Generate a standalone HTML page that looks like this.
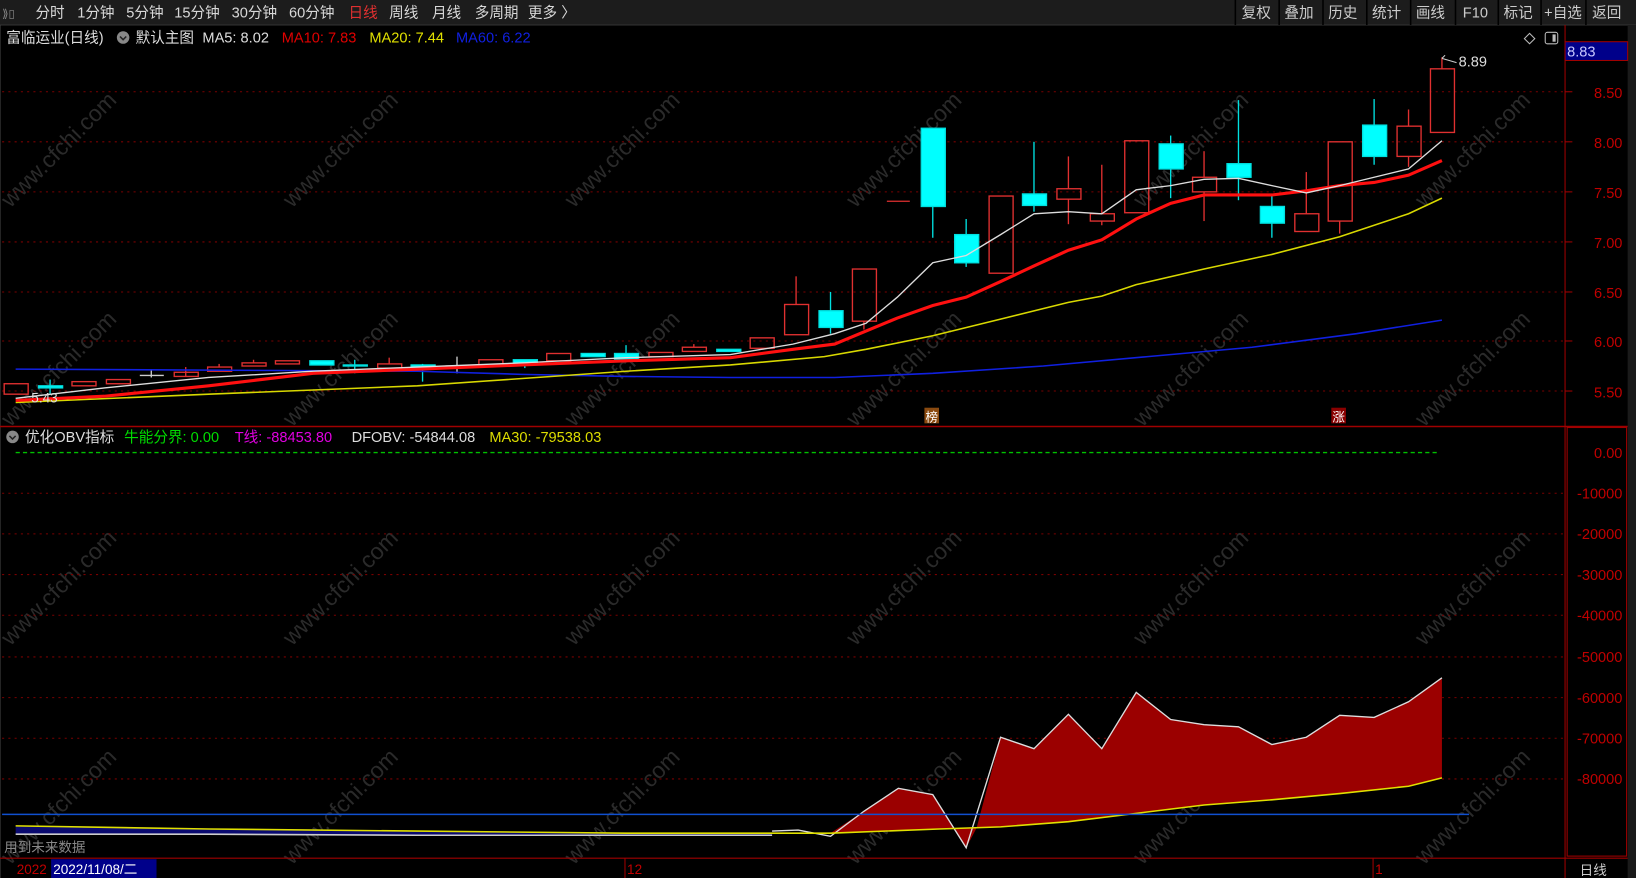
<!DOCTYPE html>
<html><head><meta charset="utf-8"><style>
html,body{margin:0;padding:0;background:#000;overflow:hidden}
svg{display:block}
text{font-family:"Liberation Sans","Noto Sans CJK SC",sans-serif}
</style></head><body>
<svg width="1636" height="878" viewBox="0 0 1568 842" preserveAspectRatio="none" xmlns="http://www.w3.org/2000/svg">
<rect width="1568" height="842" fill="#000"/>
<!-- toolbar -->
<rect x="0" y="0" width="1568" height="24" fill="#1c1c1c"/>
<line x1="0" y1="24" x2="1568" y2="24" stroke="#333"/>
<g font-size="14" fill="#d8d8d8">
<text x="2" y="17" font-size="11" fill="#888">⟫▯</text>
<text x="34" y="17">分时</text><text x="74" y="17">1分钟</text><text x="121" y="17">5分钟</text><text x="167" y="17">15分钟</text><text x="222" y="17">30分钟</text><text x="277" y="17">60分钟</text>
<text x="334" y="17" fill="#e03030">日线</text><text x="373" y="17">周线</text><text x="414" y="17">月线</text><text x="455" y="17">多周期</text><text x="506" y="17">更多 〉</text>
<g fill="#ccc"><text x="1190" y="17">复权</text><text x="1231" y="17">叠加</text><text x="1273" y="17">历史</text><text x="1315" y="17">统计</text><text x="1357" y="17">画线</text><text x="1402" y="17">F10</text><text x="1441" y="17">标记</text><text x="1480" y="17">+自选</text><text x="1526" y="17">返回</text></g>
</g>
<g stroke="#000" stroke-width="1.5"><line x1="1184" y1="0" x2="1184" y2="24"/><line x1="1226" y1="0" x2="1226" y2="24"/><line x1="1268" y1="0" x2="1268" y2="24"/><line x1="1310" y1="0" x2="1310" y2="24"/><line x1="1352" y1="0" x2="1352" y2="24"/><line x1="1395" y1="0" x2="1395" y2="24"/><line x1="1436" y1="0" x2="1436" y2="24"/><line x1="1477" y1="0" x2="1477" y2="24"/><line x1="1520" y1="0" x2="1520" y2="24"/></g>
<!-- right strip -->
<rect x="1560" y="24" width="8" height="818" fill="#1a1a1a"/>
<line x1="1500" y1="24" x2="1500" y2="842" stroke="#a00000"/>
<line x1="0" y1="24" x2="0" y2="842" stroke="#444"/>
<!-- watermarks -->
<g fill="#2a2a2a" font-size="22" font-family="Liberation Sans,sans-serif">
<g transform="translate(10,200) rotate(-45)"><text>www.cfchi.com</text></g>
<g transform="translate(280,200) rotate(-45)"><text>www.cfchi.com</text></g>
<g transform="translate(550,200) rotate(-45)"><text>www.cfchi.com</text></g>
<g transform="translate(820,200) rotate(-45)"><text>www.cfchi.com</text></g>
<g transform="translate(1095,200) rotate(-45)"><text>www.cfchi.com</text></g>
<g transform="translate(1365,200) rotate(-45)"><text>www.cfchi.com</text></g>
<g transform="translate(10,410) rotate(-45)"><text>www.cfchi.com</text></g>
<g transform="translate(280,410) rotate(-45)"><text>www.cfchi.com</text></g>
<g transform="translate(550,410) rotate(-45)"><text>www.cfchi.com</text></g>
<g transform="translate(820,410) rotate(-45)"><text>www.cfchi.com</text></g>
<g transform="translate(1095,410) rotate(-45)"><text>www.cfchi.com</text></g>
<g transform="translate(1365,410) rotate(-45)"><text>www.cfchi.com</text></g>
<g transform="translate(10,620) rotate(-45)"><text>www.cfchi.com</text></g>
<g transform="translate(280,620) rotate(-45)"><text>www.cfchi.com</text></g>
<g transform="translate(550,620) rotate(-45)"><text>www.cfchi.com</text></g>
<g transform="translate(820,620) rotate(-45)"><text>www.cfchi.com</text></g>
<g transform="translate(1095,620) rotate(-45)"><text>www.cfchi.com</text></g>
<g transform="translate(1365,620) rotate(-45)"><text>www.cfchi.com</text></g>
<g transform="translate(10,830) rotate(-45)"><text>www.cfchi.com</text></g>
<g transform="translate(280,830) rotate(-45)"><text>www.cfchi.com</text></g>
<g transform="translate(550,830) rotate(-45)"><text>www.cfchi.com</text></g>
<g transform="translate(820,830) rotate(-45)"><text>www.cfchi.com</text></g>
<g transform="translate(1095,830) rotate(-45)"><text>www.cfchi.com</text></g>
<g transform="translate(1365,830) rotate(-45)"><text>www.cfchi.com</text></g>
</g>
<!-- header -->
<g font-size="14">
<text x="6" y="41" fill="#ddd">富临运业(日线)</text>
<circle cx="118" cy="36" r="6" fill="#888"/><path d="M115 35 l3 3 l3 -3" stroke="#222" fill="none" stroke-width="1.5"/>
<text x="130" y="41" fill="#ddd">默认主图</text>
<text x="194" y="41" fill="#ddd">MA5: 8.02</text>
<text x="270" y="41" fill="#e00000">MA10: 7.83</text>
<text x="354" y="41" fill="#e0e000">MA20: 7.44</text>
<text x="437" y="41" fill="#1020e0">MA60: 6.22</text>
</g>
<path d="M1466 32 l5 5 l-5 5 l-5 -5z" stroke="#bbb" fill="none"/>
<rect x="1481" y="31" width="12" height="11" rx="2" stroke="#bbb" fill="none"/><rect x="1488" y="33" width="3" height="7" fill="#bbb"/>
<!-- price grid -->
<g stroke="#7a0000" stroke-dasharray="2,4">
<line x1="2" y1="88" x2="1500" y2="88"/><line x1="2" y1="136" x2="1500" y2="136"/><line x1="2" y1="184" x2="1500" y2="184"/><line x1="2" y1="232" x2="1500" y2="232"/><line x1="2" y1="280" x2="1500" y2="280"/><line x1="2" y1="327" x2="1500" y2="327"/><line x1="2" y1="375" x2="1500" y2="375"/>
</g>
<g fill="#c00000" font-size="14" text-anchor="end">
<text x="1555" y="94">8.50</text><text x="1555" y="142">8.00</text><text x="1555" y="190">7.50</text><text x="1555" y="238">7.00</text><text x="1555" y="286">6.50</text><text x="1555" y="333">6.00</text><text x="1555" y="381">5.50</text>
</g>
<g stroke="#a00000"><line x1="1500" y1="88" x2="1507" y2="88"/><line x1="1500" y1="136" x2="1507" y2="136"/><line x1="1500" y1="184" x2="1507" y2="184"/><line x1="1500" y1="232" x2="1507" y2="232"/><line x1="1500" y1="280" x2="1507" y2="280"/><line x1="1500" y1="327" x2="1507" y2="327"/><line x1="1500" y1="375" x2="1507" y2="375"/></g>
<rect x="1500" y="40" width="60" height="18" fill="#00008a" stroke="#a00000"/>
<text x="1502" y="54" fill="#c8c8ff" font-size="14">8.83</text>
<!-- candles -->
<g stroke-width="1.3">
<!-- red hollow -->
<g stroke="#e03030" fill="none">
<rect x="4" y="368" width="23" height="10"/>
<rect x="69" y="366" width="23" height="4"/>
<rect x="102" y="364" width="23" height="4"/>
<line x1="178" y1="352" x2="178" y2="361"/><rect x="167" y="357" width="23" height="4"/>
<rect x="199" y="352" width="23" height="4"/><line x1="210" y1="349" x2="210" y2="352"/>
<rect x="232" y="348" width="23" height="3"/><line x1="243" y1="345" x2="243" y2="348"/>
<rect x="264" y="346" width="23" height="3"/>
<rect x="362" y="349" width="23" height="4"/><line x1="373" y1="343" x2="373" y2="349"/>
<rect x="459" y="345" width="23" height="6"/>
<rect x="524" y="339" width="23" height="7"/>
<rect x="622" y="338" width="23" height="4"/>
<rect x="654" y="333" width="23" height="4"/><line x1="665" y1="330" x2="665" y2="333"/>
<rect x="719" y="324" width="23" height="10"/>
<rect x="752" y="292" width="23" height="29"/><line x1="763" y1="265" x2="763" y2="292"/>
<rect x="817" y="258" width="23" height="50"/><line x1="828" y1="308" x2="828" y2="316"/>
<line x1="850" y1="193" x2="872" y2="193"/>
<rect x="948" y="188" width="23" height="74"/>
<rect x="1013" y="181" width="23" height="10"/><line x1="1024" y1="150" x2="1024" y2="181"/><line x1="1024" y1="191" x2="1024" y2="215"/>
<rect x="1045" y="205" width="23" height="7"/><line x1="1056" y1="158" x2="1056" y2="205"/><line x1="1056" y1="212" x2="1056" y2="216"/>
<rect x="1078" y="135" width="23" height="69"/>
<rect x="1143" y="170" width="23" height="14"/><line x1="1154" y1="145" x2="1154" y2="170"/><line x1="1154" y1="184" x2="1154" y2="212"/>
<rect x="1241" y="205" width="23" height="17"/><line x1="1252" y1="165" x2="1252" y2="205"/>
<rect x="1273" y="136" width="23" height="76"/><line x1="1284" y1="212" x2="1284" y2="224"/>
<rect x="1339" y="121" width="23" height="29"/><line x1="1350" y1="105" x2="1350" y2="121"/><line x1="1350" y1="150" x2="1350" y2="160"/>
<rect x="1371" y="66" width="23" height="61"/><line x1="1382" y1="55" x2="1382" y2="66"/>
</g>
<!-- cyan -->
<g fill="#00ffff" stroke="#00e0e0">
<line x1="48" y1="364" x2="48" y2="378"/><rect x="37" y="370" width="23" height="2"/>
<rect x="297" y="346" width="23" height="4"/>
<line x1="340" y1="345" x2="340" y2="358"/><rect x="329" y="350" width="23" height="1"/>
<line x1="405" y1="349" x2="405" y2="366"/><rect x="394" y="350" width="23" height="2"/>
<rect x="492" y="345" width="23" height="4"/><line x1="503" y1="349" x2="503" y2="353"/>
<rect x="557" y="339" width="23" height="3"/>
<rect x="589" y="339" width="23" height="6"/><line x1="600" y1="331" x2="600" y2="339"/>
<rect x="687" y="335" width="23" height="2"/>
<rect x="785" y="298" width="23" height="16"/><line x1="796" y1="280" x2="796" y2="298"/><line x1="796" y1="314" x2="796" y2="320"/>
<rect x="883" y="123" width="23" height="75"/><line x1="894" y1="198" x2="894" y2="228"/>
<rect x="915" y="225" width="23" height="27"/><line x1="926" y1="210" x2="926" y2="225"/><line x1="926" y1="252" x2="926" y2="256"/>
<rect x="980" y="186" width="23" height="11"/><line x1="991" y1="136" x2="991" y2="186"/><line x1="991" y1="197" x2="991" y2="203"/>
<rect x="1111" y="138" width="23" height="24"/><line x1="1122" y1="130" x2="1122" y2="138"/><line x1="1122" y1="162" x2="1122" y2="190"/>
<rect x="1176" y="157" width="23" height="13"/><line x1="1187" y1="96" x2="1187" y2="157"/><line x1="1187" y1="170" x2="1187" y2="192"/>
<rect x="1208" y="198" width="23" height="16"/><line x1="1219" y1="188" x2="1219" y2="198"/><line x1="1219" y1="214" x2="1219" y2="228"/>
<rect x="1306" y="120" width="23" height="30"/><line x1="1317" y1="95" x2="1317" y2="120"/><line x1="1317" y1="150" x2="1317" y2="158"/>
</g>
<g stroke="#ccc"><line x1="134" y1="360" x2="157" y2="360"/><line x1="145" y1="354" x2="145" y2="362"/><line x1="427" y1="351" x2="450" y2="351"/><line x1="438" y1="342" x2="438" y2="358"/></g>
</g>
<!-- MAs -->
<polyline fill="none" stroke="#1020e0" stroke-width="1.5" points="15,354 400,356 500,359 600,361 700,362 800,362 894,358 1000,351 1100,342 1200,333 1300,320 1382,307"/>
<polyline fill="none" stroke="#d8d800" stroke-width="1.5" points="15,386 200,378 400,370 600,356 700,350 790,342 830,335 894,322 959,306 1024,290 1056,284 1089,273 1154,258 1219,244 1284,227 1350,205 1382,190"/>
<polyline fill="none" stroke="#ff1010" stroke-width="3" points="15,384 100,380 200,370 300,358 400,354 500,350 600,346 700,343 760,335 800,330 860,305 894,293 926,285 959,270 991,255 1024,240 1056,230 1089,210 1122,195 1154,187 1187,187 1219,187 1252,183 1284,178 1317,175 1350,168 1382,154"/>
<polyline fill="none" stroke="#ddd" stroke-width="1.3" points="15,382 100,372 200,362 300,356 400,352 500,348 600,343 700,340 760,330 800,320 830,310 860,285 894,252 926,245 959,225 991,205 1024,203 1056,205 1089,182 1122,178 1154,172 1187,171 1219,178 1252,185 1284,178 1317,170 1350,162 1382,135"/>
<text x="1398" y="64" fill="#ddd" font-size="14">8.89</text>
<path d="M1382 56 l14 4 M1382 56 l3 -3" stroke="#ccc" fill="none"/>
<text x="30" y="386" fill="#ddd" font-size="13">5.43</text>
<rect x="886" y="391" width="14" height="15" fill="#8a4a10"/><text x="887" y="404" fill="#fff" font-size="12">榜</text>
<rect x="1276" y="391" width="14" height="15" fill="#8a0000"/><text x="1277" y="404" fill="#fff" font-size="12">涨</text>
<!-- divider -->
<line x1="0" y1="409" x2="1560" y2="409" stroke="#a00000" stroke-width="1.5"/>
<!-- indicator header -->
<g font-size="14">
<circle cx="12" cy="419" r="6" fill="#888"/><path d="M9 418 l3 3 l3 -3" stroke="#222" fill="none" stroke-width="1.5"/>
<text x="24" y="424" fill="#ddd">优化OBV指标</text>
<text x="119" y="424" fill="#00dd00">牛能分界: 0.00</text>
<text x="225" y="424" fill="#e000e0">T线: -88453.80</text>
<text x="337" y="424" fill="#ddd">DFOBV: -54844.08</text>
<text x="469" y="424" fill="#dddd00">MA30: -79538.03</text>
</g>
<line x1="15" y1="434" x2="1378" y2="434" stroke="#00c000" stroke-dasharray="4,3" stroke-width="1.3"/>
<g stroke="#7a0000" stroke-dasharray="2,4">
<line x1="2" y1="473" x2="1500" y2="473"/><line x1="2" y1="512" x2="1500" y2="512"/><line x1="2" y1="551" x2="1500" y2="551"/><line x1="2" y1="590" x2="1500" y2="590"/><line x1="2" y1="630" x2="1500" y2="630"/><line x1="2" y1="669" x2="1500" y2="669"/><line x1="2" y1="708" x2="1500" y2="708"/><line x1="2" y1="747" x2="1500" y2="747"/>
</g>
<g fill="#c00000" font-size="14" text-anchor="end">
<text x="1555" y="439">0.00</text><text x="1555" y="478">-10000</text><text x="1555" y="517">-20000</text><text x="1555" y="556">-30000</text><text x="1555" y="595">-40000</text><text x="1555" y="635">-50000</text><text x="1555" y="674">-60000</text><text x="1555" y="713">-70000</text><text x="1555" y="752">-80000</text>
</g>
<rect x="1502" y="410" width="57" height="411" fill="none" stroke="#a00000"/>
<!-- OBV area -->
<polygon fill="#0a0a70" points="15,792 200,795 400,797 600,799 740,799 740,801 400,801 200,800 15,800"/>
<polyline fill="none" stroke="#ccc" stroke-width="1.5" points="15,800 200,800 400,801 740,801"/>
<polygon fill="#9b0000" points="796,799 828,778 861,756 894,762 916,796 926,813 936,794 959,707 991,718 1024,685 1056,718 1089,664 1122,690 1154,695 1187,697 1219,714 1252,707 1284,686 1317,688 1350,673 1382,650 1382,746 1350,754 1284,761 1219,767 1154,772 1089,780 1024,788 959,793 900,795 796,799"/>
<polyline fill="none" stroke="#ddd" stroke-width="1.3" points="740,797 765,796 796,802 828,778 861,756 894,762 926,813 959,707 991,718 1024,685 1056,718 1089,664 1122,690 1154,695 1187,697 1219,714 1252,707 1284,686 1317,688 1350,673 1382,650"/>
<polyline fill="none" stroke="#e0e000" stroke-width="1.5" points="15,792 200,795 400,797 600,799 796,799 900,795 959,793 1024,788 1089,780 1154,772 1219,767 1284,761 1350,754 1382,746"/>
<line x1="2" y1="781" x2="1408" y2="781" stroke="#1050d0" stroke-width="1.5"/>
<text x="4" y="817" fill="#888" font-size="13">用到未来数据</text>
<!-- bottom -->
<line x1="0" y1="823" x2="1560" y2="823" stroke="#a00000"/>
<text x="16" y="838" fill="#c00000" font-size="13">2022</text>
<rect x="49" y="824" width="101" height="18" fill="#00008a"/>
<text x="51" y="838" fill="#fff" font-size="13">2022/11/08/二</text>
<line x1="599" y1="823" x2="599" y2="842" stroke="#a00000"/><text x="601" y="838" fill="#c00000" font-size="13">12</text>
<line x1="1316" y1="823" x2="1316" y2="842" stroke="#a00000"/><text x="1318" y="838" fill="#c00000" font-size="13">1</text>
<text x="1514" y="839" fill="#ccc" font-size="13">日线</text>
</svg>
</body></html>
